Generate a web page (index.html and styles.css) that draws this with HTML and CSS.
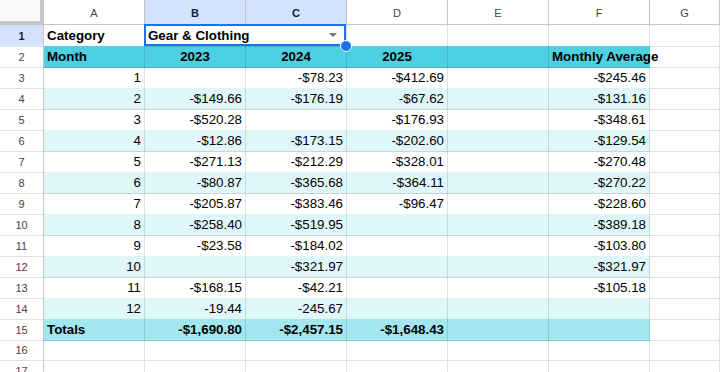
FILE: index.html
```html
<!DOCTYPE html>
<html lang="en">
<head>
    <meta charset="UTF-8">
    <title>Monthly spend - Gear & Clothing</title>
    <link rel="stylesheet" href="styles.css">
</head>
<body>
    <div class="sheet">
        <div class="row colhead">
            <div class="corner"></div>
            <div class="ch">A</div>
            <div class="ch sel">B</div>
            <div class="ch sel">C</div>
            <div class="ch">D</div>
            <div class="ch">E</div>
            <div class="ch">F</div>
            <div class="ch">G</div>
        </div>

        <div class="row">
            <div class="rh sel">1</div>
            <div class="c b">Category</div>
            <div class="c b picker">Gear &amp; Clothing<span class="arrow"></span></div>
            <div class="c"></div>
            <div class="c"></div>
            <div class="c"></div>
            <div class="c g"></div>
        </div>

        <div class="row head">
            <div class="rh">2</div>
            <div class="c b">Month</div>
            <div class="c b mid">2023</div>
            <div class="c b mid">2024</div>
            <div class="c b mid">2025</div>
            <div class="c"></div>
            <div class="c b spill">Monthly Average</div>
            <div class="c g"></div>
        </div>

        <div class="row">
            <div class="rh">3</div>
            <div class="c r">1</div>
            <div class="c r"></div>
            <div class="c r">-$78.23</div>
            <div class="c r">-$412.69</div>
            <div class="c"></div>
            <div class="c r">-$245.46</div>
            <div class="c g"></div>
        </div>
        <div class="row alt">
            <div class="rh">4</div>
            <div class="c r">2</div>
            <div class="c r">-$149.66</div>
            <div class="c r">-$176.19</div>
            <div class="c r">-$67.62</div>
            <div class="c"></div>
            <div class="c r">-$131.16</div>
            <div class="c g"></div>
        </div>
        <div class="row">
            <div class="rh">5</div>
            <div class="c r">3</div>
            <div class="c r">-$520.28</div>
            <div class="c r"></div>
            <div class="c r">-$176.93</div>
            <div class="c"></div>
            <div class="c r">-$348.61</div>
            <div class="c g"></div>
        </div>
        <div class="row alt">
            <div class="rh">6</div>
            <div class="c r">4</div>
            <div class="c r">-$12.86</div>
            <div class="c r">-$173.15</div>
            <div class="c r">-$202.60</div>
            <div class="c"></div>
            <div class="c r">-$129.54</div>
            <div class="c g"></div>
        </div>
        <div class="row">
            <div class="rh">7</div>
            <div class="c r">5</div>
            <div class="c r">-$271.13</div>
            <div class="c r">-$212.29</div>
            <div class="c r">-$328.01</div>
            <div class="c"></div>
            <div class="c r">-$270.48</div>
            <div class="c g"></div>
        </div>
        <div class="row alt">
            <div class="rh">8</div>
            <div class="c r">6</div>
            <div class="c r">-$80.87</div>
            <div class="c r">-$365.68</div>
            <div class="c r">-$364.11</div>
            <div class="c"></div>
            <div class="c r">-$270.22</div>
            <div class="c g"></div>
        </div>
        <div class="row">
            <div class="rh">9</div>
            <div class="c r">7</div>
            <div class="c r">-$205.87</div>
            <div class="c r">-$383.46</div>
            <div class="c r">-$96.47</div>
            <div class="c"></div>
            <div class="c r">-$228.60</div>
            <div class="c g"></div>
        </div>
        <div class="row alt">
            <div class="rh">10</div>
            <div class="c r">8</div>
            <div class="c r">-$258.40</div>
            <div class="c r">-$519.95</div>
            <div class="c r"></div>
            <div class="c"></div>
            <div class="c r">-$389.18</div>
            <div class="c g"></div>
        </div>
        <div class="row">
            <div class="rh">11</div>
            <div class="c r">9</div>
            <div class="c r">-$23.58</div>
            <div class="c r">-$184.02</div>
            <div class="c r"></div>
            <div class="c"></div>
            <div class="c r">-$103.80</div>
            <div class="c g"></div>
        </div>
        <div class="row alt">
            <div class="rh">12</div>
            <div class="c r">10</div>
            <div class="c r"></div>
            <div class="c r">-$321.97</div>
            <div class="c r"></div>
            <div class="c"></div>
            <div class="c r">-$321.97</div>
            <div class="c g"></div>
        </div>
        <div class="row">
            <div class="rh">13</div>
            <div class="c r">11</div>
            <div class="c r">-$168.15</div>
            <div class="c r">-$42.21</div>
            <div class="c r"></div>
            <div class="c"></div>
            <div class="c r">-$105.18</div>
            <div class="c g"></div>
        </div>
        <div class="row alt">
            <div class="rh">14</div>
            <div class="c r">12</div>
            <div class="c r">-19.44</div>
            <div class="c r">-245.67</div>
            <div class="c r"></div>
            <div class="c"></div>
            <div class="c r"></div>
            <div class="c g"></div>
        </div>

        <div class="row foot">
            <div class="rh">15</div>
            <div class="c b">Totals</div>
            <div class="c b r">-$1,690.80</div>
            <div class="c b r">-$2,457.15</div>
            <div class="c b r">-$1,648.43</div>
            <div class="c"></div>
            <div class="c"></div>
            <div class="c g"></div>
        </div>

        <div class="row">
            <div class="rh">16</div>
            <div class="c"></div>
            <div class="c"></div>
            <div class="c"></div>
            <div class="c"></div>
            <div class="c"></div>
            <div class="c"></div>
            <div class="c g"></div>
        </div>
        <div class="row">
            <div class="rh">17</div>
            <div class="c"></div>
            <div class="c"></div>
            <div class="c"></div>
            <div class="c"></div>
            <div class="c"></div>
            <div class="c"></div>
            <div class="c g"></div>
        </div>
    </div>
</body>
</html>
```

FILE: styles.css
```css
* {
    margin: 0;
    padding: 0;
    box-sizing: border-box;
}

body {
    background: white;
    font-family: "Liberation Sans", Arial, sans-serif;
    color: #000;
    overflow: hidden;
}

.sheet {
    width: 720px;
}

.row {
    display: grid;
    grid-template-columns: 44px repeat(6, 101px) 1fr;
    height: 21px;
}

/* column letters */
.colhead {
    height: 25px;
}

.corner {
    background: #f8f9fa;
    border-right: 4px solid #c4c7c5;
    border-bottom: 4px solid #c4c7c5;
}

.ch {
    display: flex;
    align-items: center;
    justify-content: center;
    font-size: 11px;
    color: #444;
    border-right: 1px solid #c4c7c5;
    border-bottom: 1px solid #c4c7c5;
    padding-top: 1px;
}

.ch.sel {
    background: #d3e3fd;
    color: #0b1f44;
    font-weight: bold;
}

/* row numbers */
.rh {
    display: flex;
    align-items: center;
    justify-content: center;
    font-size: 11px;
    color: #444;
    border-right: 1px solid #c4c7c5;
    border-bottom: 1px solid #e1e1e1;
}

.rh.sel {
    background: #d3e3fd;
    color: #0b1f44;
    font-weight: bold;
}

/* cells */
.c {
    font-size: 13.33px;
    line-height: 20px;
    padding: 1px 3px 0;
    white-space: nowrap;
    border-right: 1px solid rgba(0, 0, 0, 0.12);
    border-bottom: 1px solid rgba(0, 0, 0, 0.12);
}

.c.b { font-weight: bold; }
.c.r { text-align: right; }
.c.mid { text-align: center; }

.row.head .c:not(.g) { background: #4dd0e1; }
.row.alt .c:not(.g) { background: #e0f7fa; }
.row.foot .c:not(.g) { background: #a2e6ee; }

.c.spill {
    overflow: visible;
    border-right-color: transparent;
    position: relative;
    z-index: 1;
}

/* merged B1:C1 with dropdown + selection */
.picker {
    grid-column: span 2;
    position: relative;
    z-index: 2;
}

.picker .arrow {
    position: absolute;
    right: 9px;
    top: 8px;
    border-left: 4px solid transparent;
    border-right: 4px solid transparent;
    border-top: 4px solid #757575;
}

.picker::before {
    content: "";
    position: absolute;
    top: -1px;
    left: -1px;
    right: 0;
    bottom: 0;
    border: 2px solid #1a73e8;
}

.picker::after {
    content: "";
    position: absolute;
    right: -6px;
    bottom: -6px;
    width: 10px;
    height: 10px;
    background: #1a73e8;
    border: 1px solid white;
    border-radius: 50%;
}
```
